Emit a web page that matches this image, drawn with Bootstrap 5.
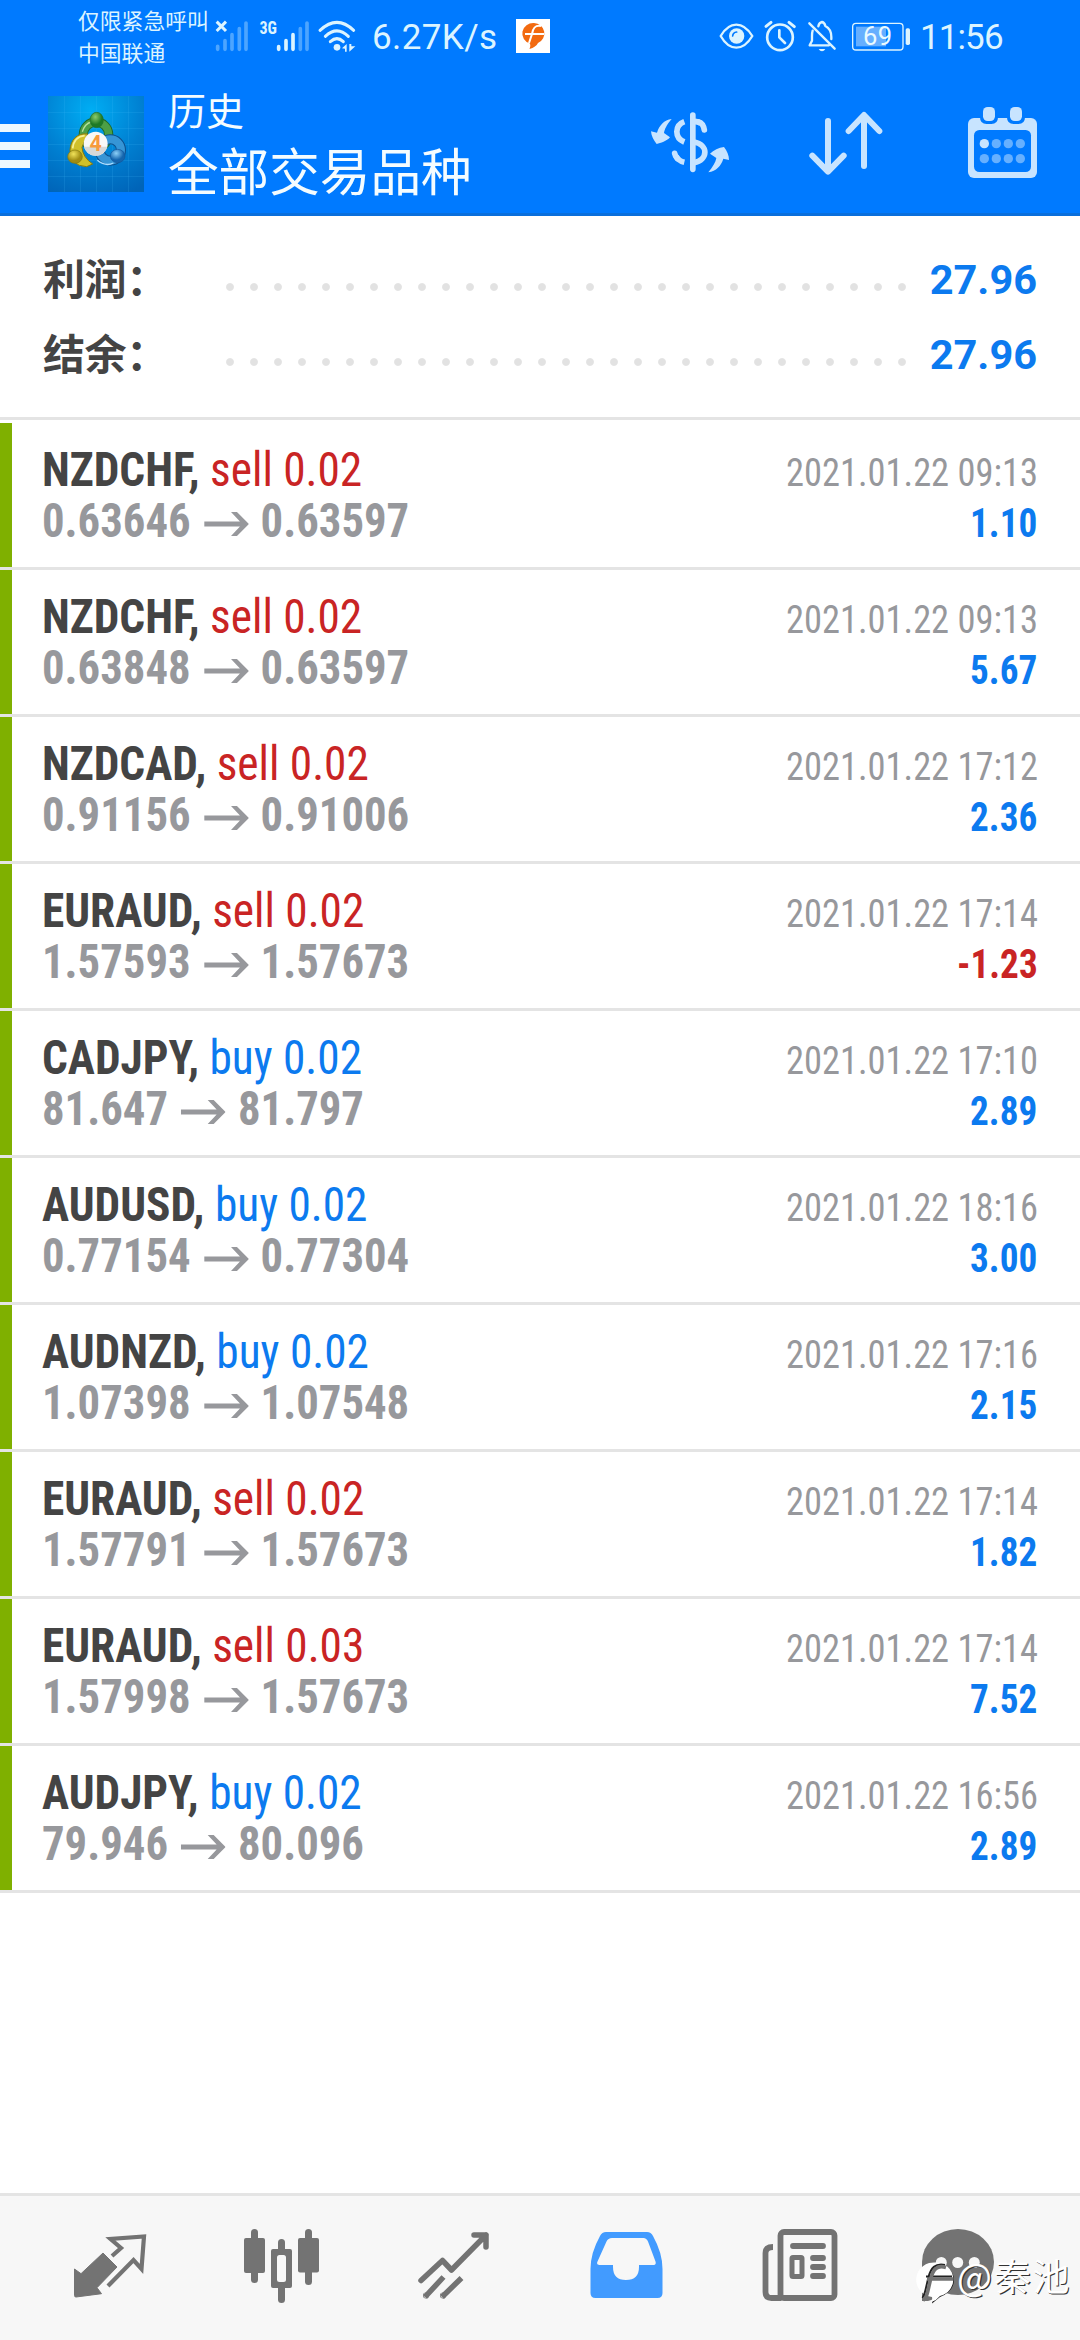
<!DOCTYPE html>
<html lang="zh-CN">
<head>
<meta charset="utf-8">
<meta name="viewport" content="width=device-width, initial-scale=1">
<title>历史</title>
<link rel="stylesheet" href="https://cdn.jsdelivr.net/npm/bootstrap@5.3.0/dist/css/bootstrap.min.css">
<style>
body{width:1080px;height:2340px;overflow:hidden;background:#fff;font-family:Roboto,"Noto Sans CJK SC",sans-serif}
svg{display:block;flex:none}
.topbar{background:#007aff;height:216px;border-bottom:3px solid #0a6fdc}
.statusbar{height:72px;color:#dcf4ff}
.carrier{width:213px;padding:4px 0 0 78px;font:400 21.8px/31.5px "Noto Sans CJK SC",sans-serif;white-space:nowrap}
.speed{width:156px;padding:17px 0 0 12px;font-size:35px;line-height:41px;letter-spacing:.4px;white-space:nowrap}
.clock{width:165px;padding:16.5px 0 0 5px;font-size:35px;line-height:41px;letter-spacing:-.9px}
.appbar{height:141px;color:#f4fcff}
.heading{padding:14px 0 0 24px;font-family:"Noto Sans CJK SC",sans-serif;white-space:nowrap}
.sub-t{font-size:38px;line-height:46px}
.main-t{font-size:50.6px;line-height:62px;margin-top:6px}
.totals{height:204px;border-bottom:3px solid #e4e4e4;padding:26px 43px 0 43px}
.total{height:75px}
.total-name{width:173px;padding-bottom:5px;font:700 42px/70px "Noto Sans CJK SC",sans-serif;color:#444;letter-spacing:-.4px}
.leader{width:696px;height:24px;margin-top:15px;background:radial-gradient(circle at 12px 12px,#e2e2e2 3.4px,transparent 4.4px) 2px 0/24px 24px repeat-x}
.total-val{font:700 41.5px/75px Roboto,sans-serif;color:#0c7aef}
.deals{padding-top:3px}
.deal{height:147px;border-bottom:3px solid #e4e4e4;background:linear-gradient(90deg,#7fb000 12px,transparent 12px);padding:21px 42.5px 0 42px;font-family:"Roboto Condensed",Roboto,sans-serif;white-space:nowrap}
.deal-line{height:51px;line-height:51px}
.narrow-l{transform:scaleX(.932);transform-origin:0 50%;font-size:48px}
.narrow-r{transform:scaleX(.93);transform-origin:100% 50%}
.pair{transform:scaleX(.944)}
.sym{font-weight:700;color:#444;white-space:pre}
.px{font-weight:700;color:#97989c}
.px svg{display:inline-block;margin:0 13px 0 14px}
.when{font-size:39.2px;color:#97989c}
.gain{font-weight:700;font-size:40px}
.c-sell,.c-loss{color:#c92424}.c-buy{color:#0c7aef}
.tabs{position:absolute;left:0;top:2193px;width:1080px;height:147px;background:#f7f7f7;border-top:3px solid #e4e4e4}
.stamp{position:absolute;left:914px;top:2252px}
.stamp-t{margin-top:-3px;font:400 37px/52px "Noto Sans CJK SC",sans-serif;color:#fff;letter-spacing:1.7px;text-shadow:1.2px 1.2px .6px #333;white-space:nowrap}
</style>
<script src="https://cdn.jsdelivr.net/npm/bootstrap@5.3.0/dist/js/bootstrap.bundle.min.js"></script>
</head>
<body class="position-relative m-0">
<header class="topbar">
  <div class="statusbar d-flex">
    <div class="carrier">仅限紧急呼叫<br>中国联通</div>
    <svg width="99" height="72" viewBox="213 0 99 72"><g transform="translate(210 10) scale(.33333)" stroke-width="11" stroke-linecap="round" fill="none">
      <path stroke="#4da5ff" d="M23 109v9M45 92v26M66 74v44M88 56v62M108 39v79M271 56v62M291 39v79"/>
      <path stroke="#dcf4ff" d="M206 110v8M228 92v26M249 74v44"/>
      <path stroke="#dcf4ff" stroke-width="9" stroke-linecap="butt" d="M20 35l28 28M48 35L20 63"/></g>
      <text x="259.5" y="34" font-family="Roboto Condensed" font-weight="700" font-size="18.5" fill="#dcf4ff" textLength="17.5" lengthAdjust="spacingAndGlyphs">3G</text></svg>
    <svg width="48" height="72" viewBox="312 0 48 72"><g transform="translate(210 10) scale(.33333)" fill="none" stroke="#dcf4ff" stroke-width="9" stroke-linecap="round">
      <path d="M330 61Q381 13 431 61M346 79Q381 46 415 79M361 95Q381 77 400 95"/><circle cx="381" cy="112" r="10" fill="#dcf4ff" stroke="none"/><path d="M396 115l14-13v23h-5v-9zM418 102v23l18-16h-12v-7z" fill="#dcf4ff" stroke="none"/></g></svg>
    <div class="speed">6.27K/s</div>
    <svg width="35" height="72" viewBox="516 0 35 72"><rect x="516" y="19" width="34" height="34" fill="#fff"/><path d="M534 23a11 10.500 0 0 1 4 20q-2 4-8.500 6 1.500-3 .5-5.500a11 10.500 0 0 1 4-20.500z" fill="#f26a10"/><path d="M541 26c-6-1-8 2-9 8l-3 9M525 34h19" fill="none" stroke="#fff" stroke-width="2"/></svg>
    <svg class="ms-auto" width="200" height="72" viewBox="715 0 200 72"><g transform="translate(560 0) scale(.33333)" fill="none" stroke="#dcf4ff" stroke-width="7" stroke-linecap="round" stroke-linejoin="round">
      <path d="M482 108Q502 74 529 74T577 108Q556 143 529 143T482 108z"/><circle cx="530" cy="108" r="23" fill="#dcf4ff" stroke="none"/><path d="M518 108q1-11 12-12" stroke="#007aff" stroke-width="5"/>
      <circle cx="660" cy="112" r="38.500" stroke-width="8"/><path d="M658 91v21l17 17" stroke-width="8"/><path d="M618 79l15-12M687 67l16 13" stroke-width="9" />
      <path d="M748 70l76 76M758 92q-2 6-2 16v14l-7 14h58M775 79q2-11 11-13 8 2 10 12 18 9 18 33v6"/><path d="M776 147h20q-4 7-10 7t-10-7z" fill="#dcf4ff" stroke="none"/>
      <rect x="878" y="70" width="151" height="80" rx="10" stroke-width="4"/><path d="M888 80h90v59h-90z" fill="#66afff" stroke="none"/><rect x="1037" y="85" width="13" height="50" rx="5" fill="#dcf4ff" stroke="none"/></g>
      <text x="863" y="45" font-family="Roboto" font-size="25.500" fill="#eafaff" textLength="29">69</text></svg>
    <div class="clock">11:56</div>
  </div>
  <div class="appbar d-flex">
    <svg width="45" height="141" viewBox="0 72 45 141"><path d="M0 124h30v8H0zM0 142h30v8H0zM0 160h30v8H0z" fill="#eef8ff"/></svg>
    <svg width="99" height="141" viewBox="45 72 99 141">
      <defs><radialGradient id="bg" cx=".45" cy=".15" r=".95"><stop offset="0" stop-color="#00aef4"/><stop offset=".55" stop-color="#0080d2"/><stop offset="1" stop-color="#0064b8"/></radialGradient>
      <radialGradient id="g" cx=".4" cy=".3"><stop offset="0" stop-color="#8ccb6c"/><stop offset="1" stop-color="#1d7a26"/></radialGradient>
      <radialGradient id="y" cx=".4" cy=".3"><stop offset="0" stop-color="#f0e25a"/><stop offset="1" stop-color="#a08c12"/></radialGradient>
      <radialGradient id="b" cx=".4" cy=".3"><stop offset="0" stop-color="#8cd0f8"/><stop offset="1" stop-color="#1465ae"/></radialGradient></defs>
      <rect x="48" y="96" width="96" height="96" fill="url(#bg)"/>
      <path d="M64.500 96v96M80.500 96v96M96.500 96v96M112.500 96v96M128.500 96v96M48 112.500h96M48 128.500h96M48 144.500h96M48 160.500h96M48 176.500h96" stroke="#4cc4ff" stroke-opacity=".15"/>
      <g transform="translate(40 90) scale(.33333)" fill="none">
        <circle cx="168" cy="134" r="38" stroke="#1f6a26" stroke-width="28"/><circle cx="168" cy="134" r="38" stroke="#4c9f46" stroke-width="22"/><path d="M127 125q8-24 26-29" stroke="#b4e09c" stroke-width="4"/>
        <circle cx="211" cy="180" r="32" stroke="#0d4f8c" stroke-width="30"/><circle cx="211" cy="180" r="32" stroke="#3695d6" stroke-width="24"/><path d="M172 211q25 20 48 8" stroke="#a8dcff" stroke-width="4"/>
        <path d="M143 132C110 128 92 150 90 180q0 48 50 50l18-8q-30-20-32-50z" fill="#d0c02a" stroke="#83780f" stroke-width="3"/><path d="M134 137q-32 3-36 38" stroke="#f8f096" stroke-width="5"/>
        <ellipse cx="170" cy="90" rx="20" ry="23" fill="url(#g)" stroke="#22702a" stroke-width="2"/>
        <ellipse cx="105" cy="200" rx="22" ry="20" fill="url(#y)" stroke="#83780f" stroke-width="2"/>
        <ellipse cx="233" cy="198" rx="22" ry="20" fill="url(#b)" stroke="#14569c" stroke-width="2"/>
        <circle cx="167" cy="161" r="36" fill="#f8f8f8"/><path d="M132 170h70a36 36 0 0 1-70 0z" fill="#d6d8d8"/>
        <text x="167" y="184" text-anchor="middle" font-family="Roboto" font-weight="700" font-size="64" fill="#f79a3c">4</text></g></svg>
    <div class="heading"><div class="sub-t">历史</div><div class="main-t">全部交易品种</div></div>
    <svg class="ms-auto" width="440" height="141" viewBox="640 72 440 141">
      <g transform="translate(640 100) scale(.33333)" fill="none" stroke="#c8e4ff" stroke-width="17" stroke-linecap="round"><path d="M158.500 45v163M176 66q14 4 17 24M104 160q2 9 8 16"/><path stroke-linecap="butt" d="M133 65C103 76 103 114 133 126M108 168Q116 183 133 187M162 126C206 134 205 180 162 188M162 64q14 1 20 6"/>
      <path stroke="none" fill="#c8e4ff" d="M95 57C79 75 73 90 72 99l18 13C80 124 62 129 50 132 41 121 34 108 33 94l18 4C58 76 72 60 95 57zM205 217C219 200 227 186 229 174l-19-13C221 150 236 143 252 141c9 12 15 25 15 39l-17-4C243 198 229 213 205 217z"/></g>
      <g transform="translate(560 0) scale(.33333)"><path d="M804 363v150M757 467l47 48 47-48M912 498V348M866 393l46-48 46 48" fill="none" stroke="#c8e4ff" stroke-width="18" stroke-linecap="round" stroke-linejoin="round"/>
      <rect x="1224" y="354" width="207" height="180" rx="18" fill="#c8e4ff"/><rect x="1242" y="390" width="171" height="126" rx="16" fill="#007aff"/>
      <path d="M1260 345h54v7q0 20-20 20h-14q-20 0-20-20zM1341 345h54v7q0 20-20 20h-14q-20 0-20-20z" fill="#007aff"/>
      <rect x="1269" y="321" width="36" height="42" rx="14" fill="#c8e4ff"/><rect x="1350" y="321" width="36" height="42" rx="14" fill="#c8e4ff"/>
      <g fill="#66b0ff"><circle cx="1273" cy="431" r="14" fill="#c8e4ff"/><circle cx="1309" cy="431" r="14"/><circle cx="1345" cy="431" r="14"/><circle cx="1381" cy="431" r="14"/><circle cx="1273" cy="476" r="14"/><circle cx="1309" cy="476" r="14"/><circle cx="1345" cy="476" r="14"/><circle cx="1381" cy="476" r="14"/></g></g></svg>
  </div>
</header>
<section class="totals">
  <div class="total d-flex align-items-center"><div class="total-name">利润：</div><div class="leader"></div><div class="total-val ms-auto">27.96</div></div>
  <div class="total d-flex align-items-center"><div class="total-name">结余：</div><div class="leader"></div><div class="total-val ms-auto">27.96</div></div>
</section>
<main class="deals" id="deals"></main>
<nav class="tabs d-flex">
  <svg width="180" height="144" viewBox="0 2196 180 144"><path d="M74.500 2269l6.500 4.700 22-20.700 14 14-20 20.700 4.500 6-25.500 3.300q-1.500 0-1.500-1.500z" fill="#737373" stroke="#737373" stroke-linejoin="round"/><path d="M112 2256l9-8-10.500-9 33.500-2.500-2.500 32.500-8-9-25.500 26" fill="none" stroke="#737373" stroke-width="4.200"/></svg>
  <svg width="180" height="144" viewBox="180 2196 180 144" fill="#737373"><rect x="244" y="2238" width="21" height="35" rx="2"/><rect x="251" y="2229" width="7" height="54" rx="3.500"/><rect x="271" y="2249" width="21" height="39" rx="2"/><rect x="278" y="2239" width="7" height="64" rx="3.500"/><rect x="277" y="2255" width="9" height="27" rx="2.500" fill="#f7f7f7"/><rect x="298" y="2238" width="21" height="34.500" rx="2"/><rect x="305" y="2229" width="7" height="56" rx="3.500"/></svg>
  <svg width="180" height="144" viewBox="360 2196 180 144" fill="none" stroke="#737373" stroke-width="5.500" stroke-linejoin="round"><path stroke-linecap="round" d="M421 2280.500l21.500-20 9 9.500 34.500-35M474 2235h12v12"/><path d="M425 2297l18.500-20M442 2297l19.500-19"/><circle cx="426" cy="2295.500" r=".3"/><circle cx="443" cy="2295.500" r=".3"/></svg>
  <svg width="180" height="144" viewBox="540 2196 180 144"><path fill-rule="evenodd" fill="#429bff" d="M606 2232h41q4 0 6 4 9.500 17 9.500 33v24q0 5-5 5h-62q-5 0-5-5v-24q0-16 9.500-33 2-4 6-4zM612 2238q-4 0-5.500 3.500l-9 20q-1.500 3.500 2 3.500h13.500v2q0 13 13 13t13-13v-2h14q3.500 0 2.500-3.500l-7.500-20q-1.500-3.500-4.500-3.500z"/></svg>
  <svg width="180" height="144" viewBox="720 2196 180 144" fill="none" stroke="#737373" stroke-width="5.800"><rect x="780.500" y="2232" width="54" height="66" rx="3.500"/><path d="M773 2247q-7.500 0-7.500 6v39q0 6 6 6h10"/><path stroke-linecap="round" d="M793 2246h30M813 2258h10M813 2267h10M813 2276h10"/><rect x="792" y="2257.500" width="10" height="19" rx="1" stroke-width="5"/></svg>
  <svg width="180" height="144" viewBox="900 2196 180 144"><ellipse cx="958" cy="2262" rx="36" ry="33" fill="#737373"/><path d="M922 2262v39h6q8-2 14-10z" fill="#737373"/><g fill="#f7f7f7"><circle cx="941.300" cy="2262.500" r="5.500"/><circle cx="957.700" cy="2262.500" r="5.500"/><circle cx="974.300" cy="2262.500" r="5.500"/></g></svg>
</nav>
<div class="stamp d-flex">
  <svg width="43" height="56" viewBox="914 2252 43 56"><path d="M937 2264q16 2 17 15.500 0 12-14 17.500l-8 6.500 1-6" fill="#111"/><path d="M936 2262.500a17.500 17 0 0 1 4 33.500q-3 4-8.500 6 1-3 .5-5a17.500 17 0 0 1 4-34.500z" fill="#fff"/><path d="M945 2265c-10-2-14 3-16.500 12l-3 13q-1 5-3 8M926 2276.500h26" fill="none" stroke="#222" stroke-width="2"/><path d="M946 2267.500c-9-3-13 2-15.500 12l-3 13q-1 5-4.500 8M927 2279h26" fill="none" stroke="#737373" stroke-width="3.600"/></svg>
  <div class="stamp-t">@秦池</div>
</div>
<script>
const deals=[
["NZDCHF","sell 0.02","0.63646","0.63597","2021.01.22 09:13","1.10"],
["NZDCHF","sell 0.02","0.63848","0.63597","2021.01.22 09:13","5.67"],
["NZDCAD","sell 0.02","0.91156","0.91006","2021.01.22 17:12","2.36"],
["EURAUD","sell 0.02","1.57593","1.57673","2021.01.22 17:14","-1.23"],
["CADJPY","buy 0.02","81.647","81.797","2021.01.22 17:10","2.89"],
["AUDUSD","buy 0.02","0.77154","0.77304","2021.01.22 18:16","3.00"],
["AUDNZD","buy 0.02","1.07398","1.07548","2021.01.22 17:16","2.15"],
["EURAUD","sell 0.02","1.57791","1.57673","2021.01.22 17:14","1.82"],
["EURAUD","sell 0.03","1.57998","1.57673","2021.01.22 17:14","7.52"],
["AUDJPY","buy 0.02","79.946","80.096","2021.01.22 16:56","2.89"]];
const arrow='<svg width="48" height="26" viewBox="0 0 45 26" preserveAspectRatio="none"><path d="M0 10.500h36L27 1h6l12 12-12 12h-6l9-9.500H0z" fill="#97989c"/></svg>';
document.getElementById("deals").innerHTML=deals.map(([s,d,a,b,t,g])=>`
<div class="deal"><div class="deal-line d-flex justify-content-between align-items-baseline"><div class="narrow-l pair"><span class="sym">${s}, </span><span class="${d[0]=="s"?"c-sell":"c-buy"}">${d}</span></div><div class="when narrow-r">${t}</div></div>
<div class="deal-line d-flex justify-content-between align-items-baseline"><div class="px narrow-l"><span>${a}</span>${arrow}<span>${b}</span></div><div class="gain narrow-r ${g[0]=="-"?"c-loss":"c-buy"}">${g}</div></div></div>`).join("");
</script>
</body>
</html>
